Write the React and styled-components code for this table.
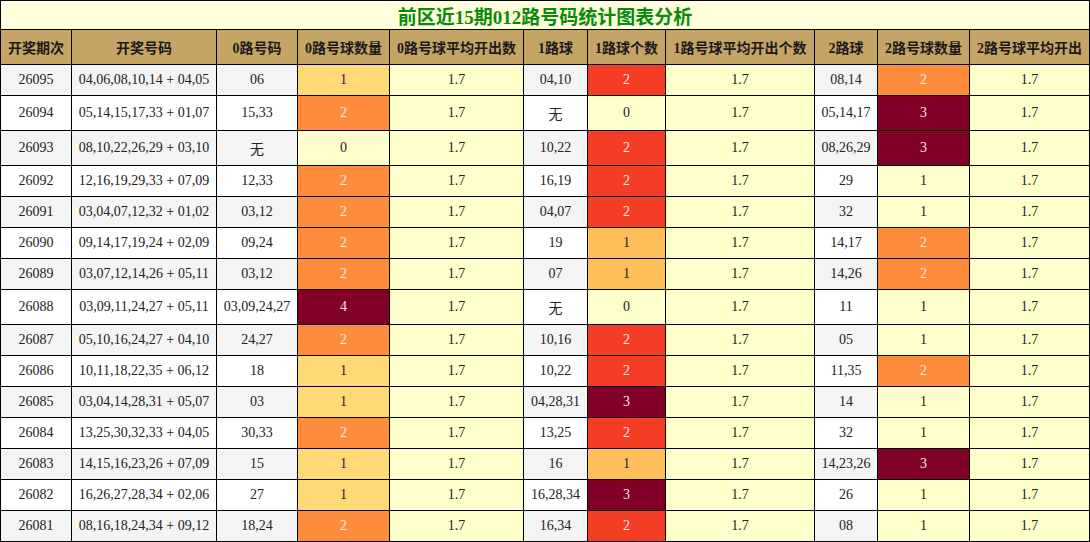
import React from 'react';
import styled, { createGlobalStyle } from 'styled-components';

const rows = [
    ['26095', '04,06,08,10,14 + 04,05', '06', 1, '04,10', 2, '08,14', 2],
    ['26094', '05,14,15,17,33 + 01,07', '15,33', 2, '无', 0, '05,14,17', 3],
    ['26093', '08,10,22,26,29 + 03,10', '无', 0, '10,22', 2, '08,26,29', 3],
    ['26092', '12,16,19,29,33 + 07,09', '12,33', 2, '16,19', 2, '29', 1],
    ['26091', '03,04,07,12,32 + 01,02', '03,12', 2, '04,07', 2, '32', 1],
    ['26090', '09,14,17,19,24 + 02,09', '09,24', 2, '19', 1, '14,17', 2],
    ['26089', '03,07,12,14,26 + 05,11', '03,12', 2, '07', 1, '14,26', 2],
    ['26088', '03,09,11,24,27 + 05,11', '03,09,24,27', 4, '无', 0, '11', 1],
    ['26087', '05,10,16,24,27 + 04,10', '24,27', 2, '10,16', 2, '05', 1],
    ['26086', '10,11,18,22,35 + 06,12', '18', 1, '10,22', 2, '11,35', 2],
    ['26085', '03,04,14,28,31 + 05,07', '03', 1, '04,28,31', 3, '14', 1],
    ['26084', '13,25,30,32,33 + 04,05', '30,33', 2, '13,25', 2, '32', 1],
    ['26083', '14,15,16,23,26 + 07,09', '15', 1, '16', 1, '14,23,26', 3],
    ['26082', '16,26,27,28,34 + 02,06', '27', 1, '16,28,34', 3, '26', 1],
    ['26081', '08,16,18,24,34 + 09,12', '18,24', 2, '16,34', 2, '08', 1],
];

// colour of each count, one scale per route column
const scales = [
    { 0: '#ffffcc', 1: '#fed976', 2: '#fd8d3c', 4: '#800026' },
    { 0: '#ffffcc', 1: '#febf5a', 2: '#f43d25', 3: '#800026' },
    { 1: '#ffffcc', 2: '#fd8d3c', 3: '#800026' },
];

const heads = ['开奖期次', '开奖号码', '0路号码', '0路号球数量', '0路号球平均开出数', '1路球', '1路球个数',
    '1路号球平均开出个数', '2路球', '2路号球数量', '2路号球平均开出'];
const widths = [71, 145, 81, 92, 134, 64, 78, 149, 63, 92, 120];

const App = () => {
    return (
        <>
            <GlobalStyle />
            <Table>
                <colgroup>
                    {widths.map((w, i) => <col key={i} style={{ width: w }} />)}
                </colgroup>
                <thead>
                    <tr>
                        <Title colSpan={11}>前区近15期012路号码统计图表分析</Title>
                    </tr>
                    <tr>
                        {heads.map(h => <Head key={h}>{h}</Head>)}
                    </tr>
                </thead>
                <tbody>
                    {rows.map((r, i) => (
                        <tr key={r[0]}>
                            <Cell $alt={i % 2 === 0}>{r[0]}</Cell>
                            <Cell $alt={i % 2 === 0}>{r[1]}</Cell>
                            {[0, 1, 2].map(k => {
                                const n = r[3 + k * 2];
                                const bg = scales[k][n];
                                const light = bg === '#800026' || n >= 2 && bg !== '#ffffcc';
                                return (
                                    <React.Fragment key={k}>
                                        <Cell $alt={i % 2 === 0}>{r[2 + k * 2]}</Cell>
                                        <Count $bg={bg} $light={light}>{n}</Count>
                                        <Avg>1.7</Avg>
                                    </React.Fragment>
                                );
                            })}
                        </tr>
                    ))}
                </tbody>
            </Table>
        </>
    );
};

export default App;

const GlobalStyle = createGlobalStyle`
    body {
        margin: 0;
        background: #fff;
        font-family: 'Liberation Serif', 'Noto Sans CJK SC', serif;
    }
`;

const Table = styled.table`
    width: 1090px;
    table-layout: fixed;
    border-collapse: collapse;
    border: 1px solid #000;
    font-size: 14px;
    color: #222;
    td, th {
        border: 1px solid #000;
        text-align: center;
        white-space: nowrap;
        overflow: hidden;
    }
`;

const Title = styled.th`
    background: #ffffdd;
    color: #0a8a0a;
    font-size: 19px;
    font-weight: bold;
    padding: 0;
    height: 28px;
`;

const Head = styled.th`
    background: #c5a565;
    color: #1a1a1a;
    font-weight: bold;
    padding: 7px 0;
    height: 20px;
`;

const Cell = styled.td`
    background: ${p => (p.$alt ? '#f4f4f4' : '#ffffff')};
    padding: 7px 0;
`;

const Count = styled.td`
    background: ${p => p.$bg};
    color: ${p => (p.$light ? '#fde8e0' : '#222')};
    padding: 7px 0;
`;

const Avg = styled.td`
    background: #ffffcc;
    padding: 7px 0;
`;
